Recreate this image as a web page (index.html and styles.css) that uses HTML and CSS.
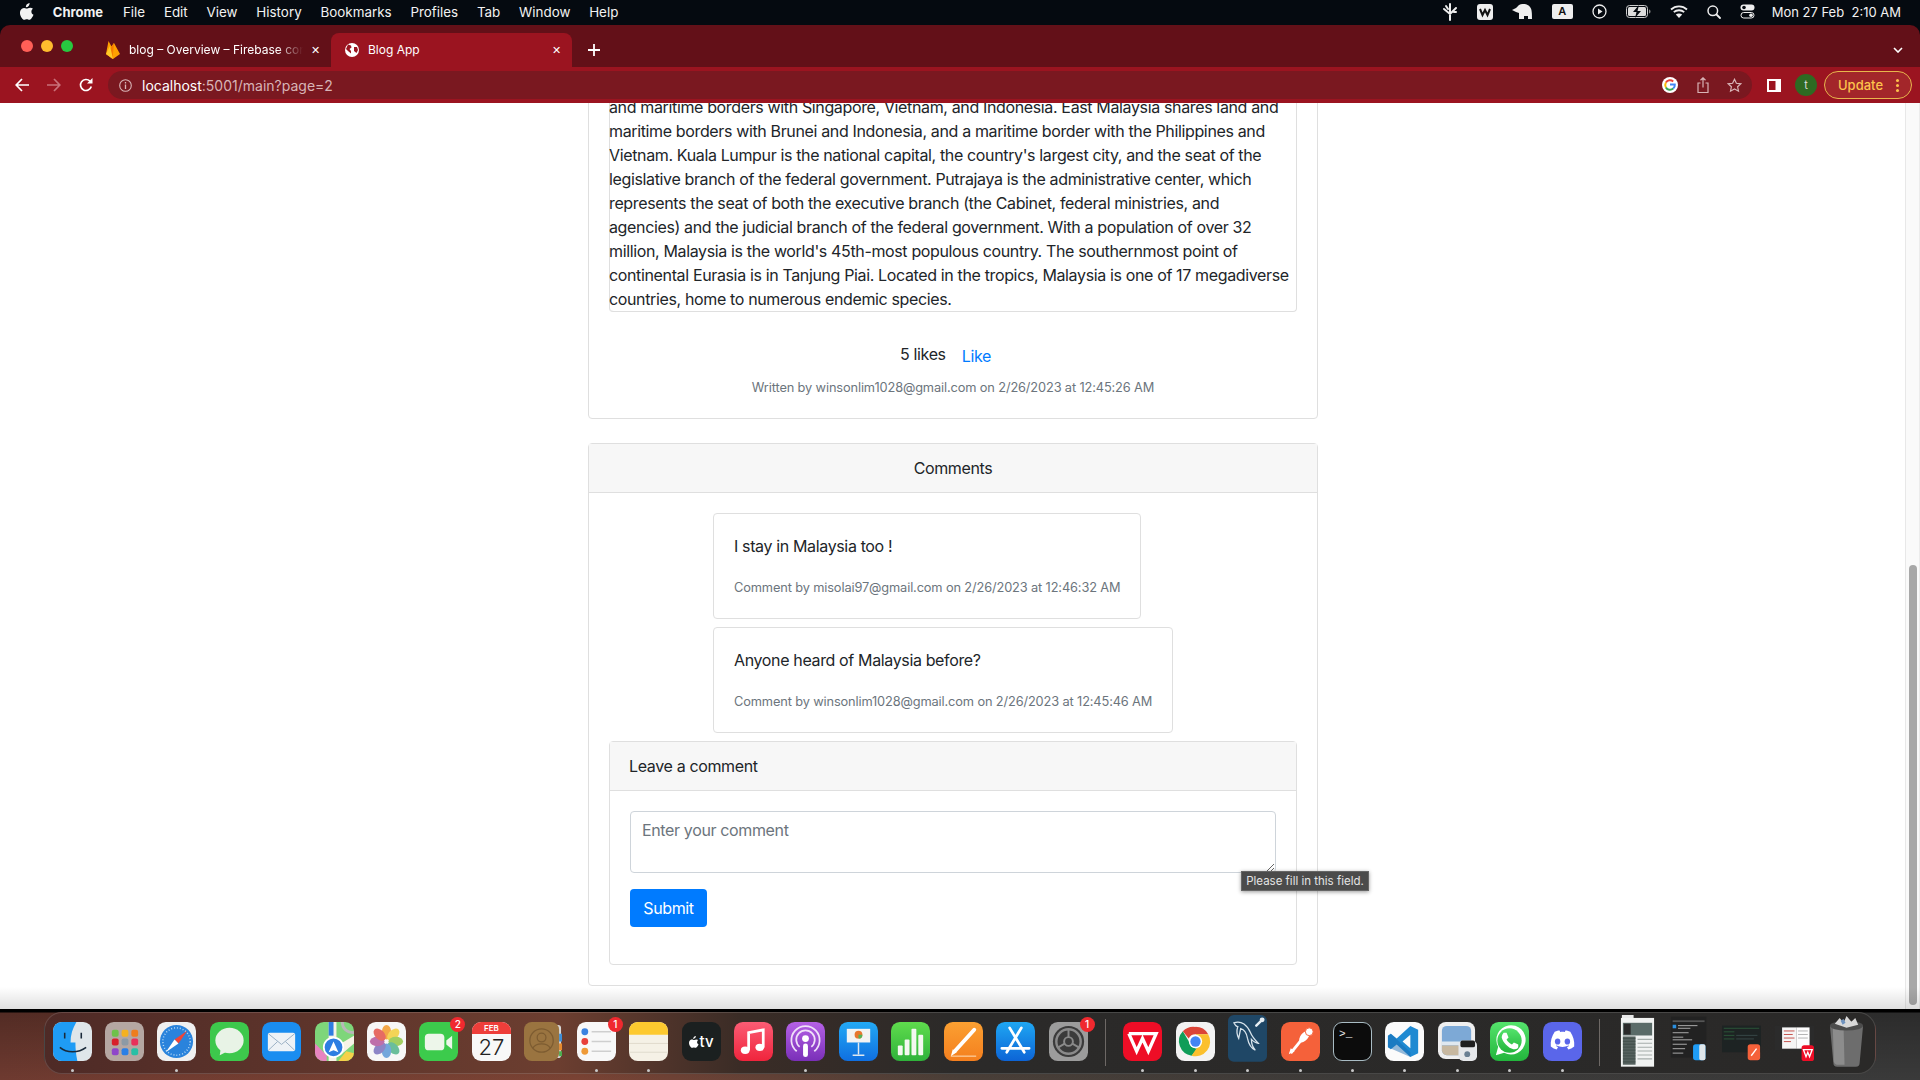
FILE: index.html
```html
<!DOCTYPE html>
<html lang="en">
<head>
  <meta charset="UTF-8">
  <title>Blog App</title>
  <link rel="stylesheet" href="styles.css">
</head>
<body>
  <div class="menubar">
    <svg class="apple" width="14" height="17" viewBox="0 0 14 17"><path fill="#f2f2f2" d="M9.6 0c.1 1.200-.4 2.300-1 3-.7.8-1.700 1.300-2.700 1.200C5.800 3.100 6.300 2 6.900 1.300 7.600.6 8.700.1 9.600 0zM13 5.800c-1 .7-1.600 1.600-1.600 2.900 0 1.500.9 2.500 2.100 3-.5 1.300-1 2.300-1.800 3.300-.7.900-1.400 1.800-2.400 1.800s-1.300-.6-2.500-.6-1.600.6-2.500.6c-1 0-1.800-1-2.500-1.900C.5 13.300-.2 11.100 0 9.200c.1-1.500.8-2.800 1.900-3.500 1.500-1 3.100-.7 4.300-.2.500.2.800.2 1.300 0 1.600-.7 3.900-1.100 5.500.3z"/></svg>
    <b class="menu-app">Chrome</b>
    <span class="menu-item">File</span>
    <span class="menu-item">Edit</span>
    <span class="menu-item">View</span>
    <span class="menu-item">History</span>
    <span class="menu-item">Bookmarks</span>
    <span class="menu-item">Profiles</span>
    <span class="menu-item">Tab</span>
    <span class="menu-item">Window</span>
    <span class="menu-item">Help</span>
    <div class="status">
      <svg width="16" height="18" viewBox="0 0 16 18"><path fill="none" stroke="#eee" stroke-width="2" stroke-linecap="round" d="M8 1v16M2 6l6 5 6-6M4 3l2 3M12 9l2 0"/></svg>
      <svg width="16" height="16" viewBox="0 0 16 16"><rect width="16" height="16" rx="3" fill="#eee"/><path fill="none" stroke="#111" stroke-width="2" d="M3 5l2.500 6L8 6l2.500 5L13 5"/></svg>
      <svg width="21" height="15" viewBox="0 0 21 15"><path fill="#eee" d="M0 6l4-2 3-3c4-2 9-1 11 2 2 2 2 7 2 12h-4v-3h-4v3H7V9L4 8z"/></svg>
      <span class="status-key">A</span>
      <svg width="15" height="15" viewBox="0 0 15 15"><circle cx="7.500" cy="7.500" r="6.500" fill="none" stroke="#eee" stroke-width="1.300"/><path fill="#eee" d="M6 4.500l4.500 3-4.500 3z"/></svg>
      <svg width="25" height="13" viewBox="0 0 25 13"><rect x=".5" y=".5" width="21" height="12" rx="3" fill="none" stroke="#ccc"/><rect x="2" y="2" width="18" height="9" rx="1.500" fill="#ddd"/><path fill="#050a10" d="M13 0L7 7h3.500L9 13l6-7h-3.500z"/><path fill="#888" d="M23 4.500c1 .2 1.500 1 1.500 2s-.5 1.800-1.500 2z"/></svg>
      <svg width="18" height="13" viewBox="0 0 18 13"><path fill="none" stroke="#eee" stroke-width="1.800" d="M1 4.500c4.500-4.200 11.500-4.200 16 0M3.800 7.200c2.900-2.600 7.500-2.600 10.400 0"/><path fill="#eee" d="M9 13L5.800 9.600c1.800-1.500 4.600-1.500 6.400 0z"/></svg>
      <svg width="14" height="14" viewBox="0 0 14 14"><circle cx="5.800" cy="5.800" r="4.800" fill="none" stroke="#eee" stroke-width="1.500"/><path stroke="#eee" stroke-width="1.800" stroke-linecap="round" d="M9.500 9.500L13 13"/></svg>
      <svg width="15" height="15" viewBox="0 0 15 15"><rect x=".5" y=".5" width="14" height="6" rx="3" fill="#eee"/><rect x="1" y="8.500" width="13" height="5.500" rx="2.700" fill="none" stroke="#eee"/><circle cx="4" cy="3.500" r="1.800" fill="#050a10"/><circle cx="11" cy="11.200" r="1.800" fill="#eee"/></svg>
    </div>
    <span class="clock">Mon 27 Feb&nbsp; 2:10 AM</span>
  </div>

  <div class="browser">
    <div class="tabstrip">
      <div class="traffic">
        <i class="light red"></i><i class="light amber"></i><i class="light green"></i>
      </div>
      <div class="tab">
        <svg class="favicon" width="14" height="19" viewBox="0 0 14 19"><path fill="#ffa000" d="M0 14L2.500 1l3 5.500L8 3l6 11-7 5z"/><path fill="#f57c00" d="M0 14L8 3l-1.500 16z"/><path fill="#ffca28" d="M0 14l4-8 3 13z"/></svg>
        <span class="tab-title fade">blog – Overview – Firebase console</span>
        <span class="tab-close">✕</span>
      </div>
      <div class="tab active">
        <svg class="favicon" width="14" height="14" viewBox="0 0 14 14"><circle cx="7" cy="7" r="7" fill="#fff"/><path fill="#9b1420" d="M3 1.500l3 1 .5 2-2 1.500 1.500 2v2.500L3 8 1 6zM9 4h3l1 3-1.500 3L9 8z"/></svg>
        <span class="tab-title">Blog App</span>
        <span class="tab-close">✕</span>
      </div>
      <svg class="new-tab" width="12" height="12" viewBox="0 0 12 12"><path stroke="#fff" stroke-width="1.800" d="M6 0v12M0 6h12"/></svg>
      <svg class="tab-menu" width="10" height="6" viewBox="0 0 10 6"><path fill="none" stroke="#fff" stroke-width="1.600" d="M1 1l4 4 4-4"/></svg>
    </div>

    <div class="toolbar">
      <svg class="nav-icon" width="14" height="14" viewBox="0 0 14 14"><path fill="none" stroke="#fff" stroke-width="1.700" d="M14 7H1.500M7 1L1.200 7 7 13"/></svg>
      <svg class="nav-icon" width="14" height="14" viewBox="0 0 14 14"><path fill="none" stroke="#c97079" stroke-width="1.700" d="M0 7h12.500M7 1l5.800 6L7 13"/></svg>
      <svg class="nav-icon" width="14" height="14" viewBox="0 0 14 14"><path fill="none" stroke="#fff" stroke-width="1.700" d="M12.300 8.500A5.500 5.500 0 1 1 11 3.200"/><path fill="#fff" d="M13.500 0v5.500H8z"/></svg>
      <div class="omnibox">
        <svg width="13" height="13" viewBox="0 0 13 13"><circle cx="6.500" cy="6.500" r="5.800" fill="none" stroke="#d8b4b6" stroke-width="1.100"/><path stroke="#d8b4b6" stroke-width="1.300" d="M6.500 5.500v4.500M6.500 3v1.500"/></svg>
        <span class="url"><b>localhost</b>:5001/main?page=2</span>
        <span class="omni-right">
          <svg width="16" height="16" viewBox="0 0 16 16"><circle cx="8" cy="8" r="8" fill="#fff"/><path fill="none" stroke="#ea4335" stroke-width="2" d="M3.900 5.600A4.800 4.800 0 0 1 11.200 4.400"/><path fill="none" stroke="#fbbc05" stroke-width="2" d="M3.900 5.600a4.800 4.800 0 0 0 0 4.800"/><path fill="none" stroke="#34a853" stroke-width="2" d="M3.900 10.400a4.800 4.800 0 0 0 7.300 1.200"/><path fill="none" stroke="#4285f4" stroke-width="2" d="M11.200 11.600A4.800 4.800 0 0 0 12.800 7.600H8"/></svg>
          <svg width="12" height="16" viewBox="0 0 12 16"><path fill="none" stroke="#d8b4b6" stroke-width="1.200" d="M3.500 6H1v9.500h10V6H8.500M6 10.500V1M3.500 3.200L6 .8l2.500 2.400"/></svg>
          <svg width="15" height="15" viewBox="0 0 15 15"><path fill="none" stroke="#d8b4b6" stroke-width="1.200" d="M7.500 1.300l1.900 4 4.400.5-3.200 3 .9 4.400-4-2.200-4 2.200.9-4.400-3.200-3 4.400-.5z"/></svg>
        </span>
      </div>
      <svg class="side-icon" width="14" height="13" viewBox="0 0 14 13"><rect width="14" height="13" fill="#fff"/><rect x="2" y="2" width="6.500" height="9" fill="#9b1420"/></svg>
      <span class="avatar">t</span>
      <span class="update">Update<i class="update-dots"></i></span>
    </div>

    <div class="viewport">
      <div class="scrolled">
        <div class="card post-card">
          <div class="post-body">
            <div class="article">and maritime borders with Singapore, Vietnam, and Indonesia. East Malaysia shares land and maritime borders with Brunei and Indonesia, and a maritime border with the Philippines and Vietnam. Kuala Lumpur is the national capital, the country's largest city, and the seat of the legislative branch of the federal government. Putrajaya is the administrative center, which represents the seat of both the executive branch (the Cabinet, federal ministries, and agencies) and the judicial branch of the federal government. With a population of over 32 million, Malaysia is the world's 45th-most populous country. The southernmost point of continental Eurasia is in Tanjung Piai. Located in the tropics, Malaysia is one of 17 megadiverse countries, home to numerous endemic species.</div>
            <div class="likes"><span>5 likes</span><a class="like-link" href="#">Like</a></div>
            <div class="muted centered">Written by winsonlim1028@gmail.com on 2/26/2023 at 12:45:26 AM</div>
          </div>
        </div>

        <div class="card comments-card">
          <div class="card-header centered">Comments</div>
          <div class="comments-body">
            <div class="comment-list">
              <div class="comment">
                <p>I stay in Malaysia too !</p>
                <div class="muted">Comment by misolai97@gmail.com on 2/26/2023 at 12:46:32 AM</div>
              </div>
              <div class="comment">
                <p>Anyone heard of Malaysia before?</p>
                <div class="muted">Comment by winsonlim1028@gmail.com on 2/26/2023 at 12:45:46 AM</div>
              </div>
            </div>
            <div class="card leave-card">
              <div class="card-header">Leave a comment</div>
              <div class="leave-body">
                <div class="textarea-wrap">
                  <textarea placeholder="Enter your comment"></textarea>
                  <div class="tooltip">Please fill in this field.</div>
                </div>
                <button class="submit">Submit</button>
              </div>
            </div>
          </div>
        </div>
      </div>
      <div class="scrollbar"><i class="scroll-thumb"></i></div>
      <div class="dock-shade"></div>
    </div>
  </div>

  <div class="desktop">
    <div class="dock">
      <!-- finder -->
      <span class="app"><svg viewBox="0 0 40 40"><rect width="40" height="40" rx="9" fill="#dfe6ea"/><path fill="#1f9cf5" d="M9 0h15c-4 7-6 13-6 21h5c0 6 .5 12 2 19H9a9 9 0 0 1-9-9V9a9 9 0 0 1 9-9z"/><path fill="none" stroke="#1a2a3a" stroke-width="1.600" d="M7 26c7 6 19 6 27 0M12 11v6M29 11v6"/></svg><i class="dot"></i></span>
      <!-- launchpad -->
      <span class="app"><svg viewBox="0 0 40 40"><rect width="40" height="40" rx="9" fill="#b5a7a2"/><rect x="7" y="8" width="7" height="7" rx="2" fill="#6ec14a"/><rect x="17" y="8" width="7" height="7" rx="2" fill="#f5b120"/><rect x="27" y="8" width="7" height="7" rx="2" fill="#ee7d1e"/><rect x="7" y="17" width="7" height="7" rx="2" fill="#d81f2a"/><rect x="17" y="17" width="7" height="7" rx="2" fill="#8d9aa5"/><rect x="27" y="17" width="7" height="7" rx="2" fill="#e8305a"/><rect x="7" y="27" width="7" height="7" rx="2" fill="#8f45c9"/><rect x="17" y="27" width="7" height="7" rx="2" fill="#2a7fe6"/><rect x="27" y="27" width="7" height="7" rx="2" fill="#28bfa5"/></svg></span>
      <!-- safari -->
      <span class="app"><svg viewBox="0 0 40 40"><rect width="40" height="40" rx="9" fill="#f0f0f0"/><circle cx="20" cy="20" r="17" fill="#2a83dc"/><circle cx="20" cy="20" r="14" fill="none" stroke="#bcdcf5" stroke-width="1.500" stroke-dasharray="1 2"/><path fill="#f04438" d="M31 9L18 18l4 4z"/><path fill="#fff" d="M9 31l9-13 4 4z"/></svg><i class="dot"></i></span>
      <!-- messages -->
      <span class="app"><svg viewBox="0 0 40 40"><rect width="40" height="40" rx="9" fill="#3dc84c"/><ellipse cx="20" cy="19" rx="14.500" ry="13" fill="#e8f3e6"/><path fill="#e8f3e6" d="M11 27l-1 7 8-4z"/></svg></span>
      <!-- mail -->
      <span class="app"><svg viewBox="0 0 40 40"><rect width="40" height="40" rx="9" fill="#1a8df0"/><rect x="6" y="11" width="28" height="19" rx="2" fill="#eef2f6"/><path fill="none" stroke="#9ab0c4" d="M6.500 12L20 23l13.500-11M6.500 29L16 20M33.500 29L24 20"/></svg></span>
      <!-- maps -->
      <span class="app"><svg viewBox="0 0 40 40"><rect width="40" height="40" rx="9" fill="#7ed67a"/><path fill="#f7f3e6" d="M14 0h8v40h-8z"/><path fill="#e884c0" d="M0 22l12 12v6H9a9 9 0 0 1-9-9z"/><path fill="#f6d24a" d="M24 40l8-10 8 2v-1 0a9 9 0 0 1-9 9z"/><path fill="#f7f3e6" d="M20 26L40 14v8L26 34z"/><path fill="none" stroke="#b8b8b8" stroke-width="3" d="M28 0c0 6 4 11 12 11"/><path fill="#2f7de1" d="M14 0h5v14h-5z"/><circle cx="19" cy="26" r="10" fill="#2d7ee2" stroke="#fff" stroke-width="1.800"/><path fill="#fff" d="M19 20l5 11-5-2-5 2z"/></svg></span>
      <!-- photos -->
      <span class="app"><svg viewBox="0 0 40 40"><rect width="40" height="40" rx="9" fill="#f7f7f7"/><g opacity=".85"><ellipse cx="20" cy="10.500" rx="4.800" ry="7.500" fill="#f39a2a"/><ellipse cx="27" cy="13" rx="4.800" ry="7.500" transform="rotate(45 27 13)" fill="#f4cf3b"/><ellipse cx="29.500" cy="20" rx="7.500" ry="4.800" fill="#93c748"/><ellipse cx="27" cy="27" rx="4.800" ry="7.500" transform="rotate(-45 27 27)" fill="#52b58c"/><ellipse cx="20" cy="29.500" rx="4.800" ry="7.500" fill="#5d9ad8"/><ellipse cx="13" cy="27" rx="4.800" ry="7.500" transform="rotate(45 13 27)" fill="#7b72bf"/><ellipse cx="10.500" cy="20" rx="7.500" ry="4.800" fill="#b5589d"/><ellipse cx="13" cy="13" rx="4.800" ry="7.500" transform="rotate(-45 13 13)" fill="#e4534a"/></g></svg></span>
      <!-- facetime -->
      <span class="app"><svg viewBox="0 0 40 40"><rect width="40" height="40" rx="9" fill="#3ccb4c"/><rect x="6" y="12" width="20" height="17" rx="4" fill="#edf6ea"/><path fill="#edf6ea" d="M28 19l6-5v14l-6-5z"/></svg><b class="badge">2</b></span>
      <!-- calendar -->
      <span class="app cal"><span class="cal-month">FEB</span><span class="cal-day">27</span></span>
      <!-- contacts -->
      <span class="app"><svg viewBox="0 0 40 40"><rect x="30" y="3" width="8" height="34" rx="3" fill="#d7d7d7"/><rect x="36" y="12" width="3" height="8" fill="#3f8fd8"/><rect x="36" y="22" width="3" height="7" fill="#e88b2d"/><rect x="36" y="30" width="3" height="5" fill="#4cae4f"/><rect width="36" height="40" rx="8" fill="#9a7440"/><circle cx="18" cy="19" r="12" fill="none" stroke="#7d5c31" stroke-width="1.300"/><circle cx="18" cy="16" r="4.500" fill="none" stroke="#7d5c31" stroke-width="1.300"/><path fill="none" stroke="#7d5c31" stroke-width="1.300" d="M9 27c3-6 15-6 18 0"/></svg></span>
      <!-- reminders -->
      <span class="app"><svg viewBox="0 0 40 40"><rect width="40" height="40" rx="9" fill="#f8f8f8"/><circle cx="8" cy="10" r="3.500" fill="#3b82e0"/><circle cx="8" cy="20" r="3.500" fill="#e8403a"/><circle cx="8" cy="30" r="3.500" fill="#ef9a38"/><path stroke="#cfcfcf" stroke-width="1.300" d="M15 10h20M15 20h20M15 30h20"/></svg><b class="badge">1</b><i class="dot"></i></span>
      <!-- notes -->
      <span class="app"><svg viewBox="0 0 40 40"><rect width="40" height="40" rx="9" fill="#f5f1e6"/><path fill="#fdc92f" d="M9 0h22a9 9 0 0 1 9 9v4H0V9a9 9 0 0 1 9-9z"/><path stroke="#dfdacc" d="M0 22h40M0 31h40"/></svg><i class="dot"></i></span>
      <!-- tv -->
      <span class="app tv"><svg width="10" height="12" viewBox="0 0 14 17"><path fill="#fff" d="M9.600 0c.1 1.200-.4 2.300-1 3-.7.800-1.700 1.300-2.700 1.200C5.800 3.100 6.300 2 6.900 1.300 7.600.6 8.700.1 9.600 0zM13 5.800c-1 .7-1.600 1.600-1.600 2.900 0 1.500.9 2.500 2.100 3-.5 1.300-1 2.300-1.800 3.300-.7.900-1.400 1.800-2.400 1.800s-1.300-.6-2.500-.6-1.600.6-2.500.6c-1 0-1.800-1-2.500-1.900C.5 13.300-.2 11.100 0 9.200c.1-1.500.8-2.800 1.900-3.500 1.500-1 3.100-.7 4.300-.2.500.2.800.2 1.300 0 1.600-.7 3.900-1.100 5.500.3z"/></svg><span>tv</span></span>
      <!-- music -->
      <span class="app"><svg viewBox="0 0 40 40"><defs><linearGradient id="mus" x1="0" y1="0" x2="0" y2="1"><stop offset="0" stop-color="#fb5c74"/><stop offset="1" stop-color="#f0243c"/></linearGradient></defs><rect width="40" height="40" rx="9" fill="url(#mus)"/><path fill="none" stroke="#fff" stroke-width="2.800" d="M15 29V11l15-3v18"/><ellipse cx="11.500" cy="29" rx="4.500" ry="3.800" fill="#fff"/><ellipse cx="26.500" cy="26" rx="4.500" ry="3.800" fill="#fff"/></svg></span>
      <!-- podcasts -->
      <span class="app"><svg viewBox="0 0 40 40"><defs><linearGradient id="pod" x1="0" y1="0" x2="0" y2="1"><stop offset="0" stop-color="#b561e6"/><stop offset="1" stop-color="#7a2fb8"/></linearGradient></defs><rect width="40" height="40" rx="9" fill="url(#pod)"/><g fill="none" stroke="#efe0f8" stroke-width="1.800"><path d="M11 30A14.500 14.500 0 1 1 29 30"/><path d="M14 25.500a9.500 9.500 0 1 1 12 0"/></g><circle cx="20" cy="17" r="3.500" fill="#fff"/><rect x="17.500" y="22" width="5" height="14" rx="2.500" fill="#fff"/></svg><i class="dot"></i></span>
      <!-- keynote -->
      <span class="app"><svg viewBox="0 0 40 40"><defs><linearGradient id="key" x1="0" y1="0" x2="0" y2="1"><stop offset="0" stop-color="#23a9f5"/><stop offset="1" stop-color="#0f6fe0"/></linearGradient></defs><rect width="40" height="40" rx="9" fill="url(#key)"/><rect x="8" y="7" width="24" height="14" fill="#f3f3f3"/><circle cx="20" cy="13" r="4" fill="#e8772e"/><path fill="#52b558" d="M20 13h4a4 4 0 0 1-4 4z"/><path stroke="#dfe8f0" stroke-width="1.500" d="M20 21v12M14 34h12"/></svg></span>
      <!-- numbers -->
      <span class="app"><svg viewBox="0 0 40 40"><defs><linearGradient id="num" x1="0" y1="0" x2="0" y2="1"><stop offset="0" stop-color="#5fdc4d"/><stop offset="1" stop-color="#2fb23a"/></linearGradient></defs><rect width="40" height="40" rx="9" fill="url(#num)"/><g fill="#f4f8f0"><rect x="7" y="24" width="5" height="10" rx="1"/><rect x="14" y="18" width="5" height="16" rx="1"/><rect x="21" y="7" width="5" height="27" rx="1"/><rect x="28" y="13" width="5" height="21" rx="1"/></g></svg></span>
      <!-- pages -->
      <span class="app"><svg viewBox="0 0 40 40"><defs><linearGradient id="pag" x1="0" y1="0" x2="0" y2="1"><stop offset="0" stop-color="#fba032"/><stop offset="1" stop-color="#f47f1e"/></linearGradient></defs><rect width="40" height="40" rx="9" fill="url(#pag)"/><path stroke="#fff" stroke-width="4" stroke-linecap="round" d="M31 8L11 30"/><path fill="#fff" d="M7 35l2-7 4 3z"/><path stroke="#ffe3c0" d="M7 35h26"/></svg></span>
      <!-- app store -->
      <span class="app"><svg viewBox="0 0 40 40"><defs><linearGradient id="app" x1="0" y1="0" x2="0" y2="1"><stop offset="0" stop-color="#1fa7f3"/><stop offset="1" stop-color="#0c64d6"/></linearGradient></defs><rect width="40" height="40" rx="9" fill="url(#app)"/><path fill="none" stroke="#fff" stroke-width="2.800" stroke-linecap="round" d="M14 6l15 25M26 6L11 31M6 27h28"/></svg></span>
      <!-- system preferences -->
      <span class="app"><svg viewBox="0 0 40 40"><rect width="40" height="40" rx="9" fill="#9c9c9c"/><circle cx="20" cy="20" r="16" fill="#3b3b3b"/><circle cx="20" cy="20" r="12.500" fill="none" stroke="#8a8a8a" stroke-width="2.500"/><circle cx="20" cy="20" r="4.500" fill="none" stroke="#8a8a8a" stroke-width="2"/><path stroke="#8a8a8a" stroke-width="2" d="M20 8v8M9.500 26l7-4M30.500 26l-7-4"/></svg><b class="badge">1</b></span>
      <i class="dock-sep"></i>
      <!-- wps -->
      <span class="app"><svg viewBox="0 0 40 40"><rect width="40" height="40" rx="9" fill="#ee0d26"/><path fill="none" stroke="#fff" stroke-width="3.400" d="M6 12l8 18 6-13 6 13 8-18H6"/></svg><i class="dot"></i></span>
      <!-- chrome -->
      <span class="app"><svg viewBox="0 0 40 40"><rect width="40" height="40" rx="9" fill="#f3f3f3"/><path fill="#db4437" d="M20 5a15 15 0 0 1 13 7.500H20a7.500 7.500 0 0 0-7 4.500L7 9.500A15 15 0 0 1 20 5z"/><path fill="#0f9d58" d="M7 9.500l6.500 11a7.500 7.500 0 0 0 9 6.500L16 34.500A15 15 0 0 1 7 9.500z"/><path fill="#fbc02d" d="M33 12.500A15 15 0 0 1 16 34.500L23 24a7.500 7.500 0 0 0-3-11.500z"/><circle cx="20" cy="20" r="6.800" fill="#fff"/><circle cx="20" cy="20" r="5.300" fill="#4285f4"/></svg><i class="dot"></i></span>
      <!-- mysql workbench -->
      <span class="app tall"><svg viewBox="0 0 40 48"><rect width="40" height="48" rx="6" fill="#1f4766"/><path fill="none" stroke="#d8e4ec" stroke-width="1.300" d="M6 8c8-3 14 3 17 10 2 5 5 8 8 11-3 0-5-2-7-4 0 4 1 8 4 11-5-2-7-7-8-12-1-6-3-9-7-10l-2 10c-2-4-2-9-1-12-2 0-3-2-4-4z"/><path stroke="#e6eef3" stroke-width="2.500" stroke-linecap="round" d="M29 11l6-6"/><circle cx="35" cy="5" r="2.500" fill="#e6eef3"/></svg><i class="dot"></i></span>
      <!-- postman -->
      <span class="app"><svg viewBox="0 0 40 40"><rect width="40" height="40" rx="9" fill="#f5613a"/><path fill="none" stroke="#fff" stroke-width="3" d="M10 32l12-15"/><ellipse cx="24" cy="15" rx="3.800" ry="7" transform="rotate(40 24 15)" fill="#fff"/><circle cx="29" cy="10" r="4" fill="#fff" stroke="#f5613a"/><path fill="#fff" d="M8 33l2-6 4 3z"/></svg><i class="dot"></i></span>
      <!-- terminal -->
      <span class="app term"><span>&gt;_</span><i class="dot"></i></span>
      <!-- vscode -->
      <span class="app"><svg viewBox="0 0 40 40"><rect width="40" height="40" rx="9" fill="#fbfbfb"/><path fill="#1f8ad2" d="M26 4l8 4v24l-8 4-14-13-6 5-3-2v-12l3-2 6 5zM26 13l-8 7 8 7z"/><path fill="#1769b0" d="M3 14l3-2 20 19v5L3 26z" opacity=".45"/></svg><i class="dot"></i></span>
      <!-- preview -->
      <span class="app"><svg viewBox="0 0 40 40"><rect width="38" height="38" rx="8" fill="#efefef"/><rect x="4" y="4" width="30" height="30" rx="5" fill="#7da9d6"/><path fill="#dfe8f0" d="M4 20h30v4H4z"/><path fill="#c7b8a0" d="M4 24h30v5a5 5 0 0 1-5 5H9a5 5 0 0 1-5-5z"/><rect x="21" y="19" width="19" height="21" rx="5" fill="#e5e7ea"/><rect x="23" y="19" width="15" height="7" rx="2" fill="#1f1f1f"/><circle cx="30" cy="33" r="3" fill="#6a7f92"/></svg><i class="dot"></i></span>
      <!-- whatsapp -->
      <span class="app"><svg viewBox="0 0 40 40"><defs><linearGradient id="wa" x1="0" y1="0" x2="0" y2="1"><stop offset="0" stop-color="#55e36c"/><stop offset="1" stop-color="#22b53c"/></linearGradient></defs><rect width="40" height="40" rx="9" fill="url(#wa)"/><path fill="#fff" d="M6 34l2.400-8.500A15 15 0 1 1 14.500 31.500z"/><circle cx="20" cy="19" r="12.500" fill="url(#wa)"/><path fill="#fff" d="M14 11l3 0 2 5-2 2c1 2 3 4 5.500 5l2-2 4.500 2v3c-1 2-3 2-5 2-5-1-11-7-12-12 0-2 1-4 2-5z"/></svg><i class="dot"></i></span>
      <!-- discord -->
      <span class="app"><svg viewBox="0 0 40 40"><rect width="40" height="40" rx="9" fill="#5a66ea"/><path fill="#fff" d="M12 10c2-.8 4-1.200 5-1.200l.6 1.400c1.600-.2 3.200-.2 4.800 0l.6-1.400c1 0 3 .4 5 1.200 3 4.500 4.500 9.500 4 15-2 1.600-4 2.600-6 3.200l-1.400-2.400c.8-.3 1.500-.6 2.200-1.100l-.6-.5c-4.200 2-8.200 2-12.400 0l-.6.5c.7.500 1.400.8 2.200 1.100L14 28.200c-2-.6-4-1.600-6-3.200-.5-5.500 1-10.500 4-15z"/><ellipse cx="15" cy="20" rx="2.800" ry="3.200" fill="#5a66ea"/><ellipse cx="25" cy="20" rx="2.800" ry="3.200" fill="#5a66ea"/></svg><i class="dot"></i></span>
      <i class="dock-sep"></i>
      <!-- pinned document -->
      <span class="app doc"><svg viewBox="0 0 40 54"><rect x="4" y="0" width="12" height="5" fill="#e8e8e8"/><rect x="3" y="3" width="34" height="50" fill="#f1f3f2"/><rect x="5" y="8" width="30" height="13" fill="#5a6b68"/><rect x="6" y="9" width="7" height="11" fill="#2a2a2a"/><g stroke="#9aa6a2" stroke-width="1.300"><path d="M5 24h13M5 27h13M5 30h13M5 33h13M5 36h13M5 39h13M5 42h13M5 45h13M5 48h13"/></g><rect x="5" y="22" width="13" height="29" fill="#2f3d3a" opacity=".8"/><g stroke="#a5adaa" stroke-width="1.100"><path d="M20 25h15M20 29h15M20 33h15M20 37h15M20 41h15M20 45h15"/></g></svg></span>
      <!-- stack: finder window -->
      <span class="app thumb"><svg viewBox="0 0 44 54"><rect x="1" y="2" width="40" height="46" fill="#222"/><rect x="3" y="6" width="36" height="2" fill="#555"/><rect x="3" y="11" width="4" height="4" fill="#2a8fe0"/><path stroke="#bbb" d="M9 12h22M9 15h14M3 20h18M3 25h12M3 28h22M3 33h16M3 38h14M3 43h12"/><rect x="26" y="33" width="14" height="18" rx="3" fill="#1f9cf5"/><rect x="33" y="33" width="7" height="18" rx="2" fill="#dfe6ea"/></svg></span>
      <!-- stack: postman window -->
      <span class="app thumb"><svg viewBox="0 0 44 54"><rect x="0" y="12" width="44" height="30" fill="#1d2323"/><path stroke="#2c5a3a" d="M2 15h40M2 19h12M2 23h12M2 27h12"/><path stroke="#3a4a4a" d="M16 23h24M16 27h20"/><rect x="29" y="33" width="14" height="18" rx="3" fill="#f5613a"/><path stroke="#fff" stroke-width="1.500" d="M33 46l6-8"/></svg></span>
      <!-- stack: wps window -->
      <span class="app thumb"><svg viewBox="0 0 44 54"><rect x="0" y="12" width="44" height="28" fill="#2b2b2b"/><rect x="8" y="14" width="16" height="24" fill="#f5f5f5"/><rect x="24" y="14" width="15" height="24" fill="#fdfdfd"/><path stroke="#c0403a" d="M10 18h12M10 22h10M10 26h12M10 30h8"/><path stroke="#aaa" d="M26 18h11M26 22h11M26 26h11"/><rect x="30" y="34" width="14" height="18" rx="3" fill="#ee0d26"/><path fill="none" stroke="#fff" stroke-width="1.500" d="M32 39l3 8 2-5 2 5 3-8z"/></svg></span>
      <!-- trash -->
      <span class="app doc"><svg viewBox="0 0 40 54"><path fill="#6d6d6d" d="M3 11h34l-3.500 38a4 4 0 0 1-4 4h-19a4 4 0 0 1-4-4z"/><path fill="#8c8c8c" d="M6 13h11l1 38h-8a4 4 0 0 1-3-3z"/><ellipse cx="20" cy="11" rx="17" ry="5" fill="#4c4c4c"/><path fill="#d8d8d8" d="M8 9l5-6 4 5 3-7 5 6 4-4 3 7-12 3z"/><path fill="#6f93bf" d="M14 6l3-2 2 4-3 2z"/></svg></span>
    </div>
  </div>
</body>
</html>
```

FILE: styles.css
```css
* {
  box-sizing: border-box;
}
html, body {
  height: 100%;
}
body {
  margin: 0;
  height: 1080px;
  overflow: hidden;
  display: flex;
  flex-direction: column;
  font-family: "Inter", "Liberation Sans", sans-serif;
  background: #050a10;
}

/* mac menu bar */
.menubar {
  height: 25px;
  flex: none;
  display: flex;
  align-items: center;
  gap: 18.800px;
  padding: 0 0 2px 20px;
  background: #050a10;
  color: #f2f2f2;
  font-size: 13.400px;
}
.menu-app {
  font-size: 13px;
  font-weight: 700;
  margin-right: 1px;
}
.menu-item {
  white-space: nowrap;
}
.status {
  margin-left: auto;
  display: flex;
  align-items: center;
  gap: 19px;
}
.status-key {
  width: 21px;
  height: 15px;
  border-radius: 2px;
  background: #eee;
  color: #111;
  font-size: 11px;
  font-weight: 600;
  text-align: center;
  line-height: 15px;
}
.clock {
  font-size: 13px;
  margin-left: -2px;
  margin-right: 19px;
  white-space: nowrap;
}

/* chrome */
.browser {
  flex: none;
  height: 984px;
  display: flex;
  flex-direction: column;
  border-radius: 10px 10px 0 0;
  overflow: hidden;
}
.tabstrip {
  height: 42px;
  flex: none;
  display: flex;
  align-items: flex-end;
  background: #631018;
  color: #fff;
  font-size: 12px;
}
.traffic {
  align-self: flex-start;
  display: flex;
  gap: 8px;
  margin: 15px 0 0 21px;
  width: 85px;
}
.light {
  width: 12px;
  height: 12px;
  border-radius: 50%;
}
.red { background: #ff5f57; }
.amber { background: #febc2e; }
.green { background: #28c840; }
.tab {
  width: 225px;
  height: 34px;
  display: flex;
  align-items: center;
  padding-bottom: 1px;
  flex: none;
}
.tab .favicon {
  margin-right: 9px;
  flex: none;
}
.tab-title {
  flex: 1;
  white-space: nowrap;
  overflow: hidden;
}
.fade {
  -webkit-mask-image: linear-gradient(to right, #000 85%, transparent 100%);
  mask-image: linear-gradient(to right, #000 85%, transparent 100%);
}
.tab-close {
  font-size: 11px;
  width: 14px;
  margin: 0 9px 0 5px;
  text-align: center;
}
.tab.active {
  width: 241px;
  background: #9b1420;
  border-radius: 8px 8px 0 0;
  padding-left: 14px;
}
.new-tab {
  margin: 0 0 11px 16px;
}
.tab-menu {
  margin: 0 17px 14px auto;
}
.toolbar {
  height: 36px;
  flex: none;
  display: flex;
  align-items: center;
  background: #9b1420;
  padding-left: 15px;
}
.nav-icon {
  margin-right: 18px;
  flex: none;
}
.omnibox {
  width: 1644px;
  height: 28px;
  margin-left: -3px;
  flex: none;
  display: flex;
  align-items: center;
  border-radius: 14px;
  background: #7a1820;
  padding-left: 11px;
  font-size: 14px;
  color: #d8b4b6;
}
.url {
  margin-left: 10px;
}
.url b {
  font-weight: 400;
  color: #fff;
}
.omni-right {
  margin-left: auto;
  margin-right: 10px;
  display: flex;
  align-items: center;
  gap: 18.500px;
}
.side-icon {
  margin-left: 15px;
  flex: none;
}
.avatar {
  width: 22px;
  height: 22px;
  margin-left: 14px;
  border-radius: 50%;
  background: #2e6a22;
  color: #ddd;
  font-size: 11px;
  text-align: center;
  line-height: 22px;
  flex: none;
}
.update {
  width: 88px;
  height: 28px;
  margin-left: 7px;
  flex: none;
  display: flex;
  align-items: center;
  border: 1px solid #e8b64c;
  border-radius: 14px;
  padding-left: 13px;
  background: #a3262a;
  color: #fdc24c;
  font-size: 13px;
  font-weight: 500;
  position: relative;
}
.update-dots {
  position: absolute;
  right: 12px;
  top: 7px;
  width: 3px;
  height: 3px;
  border-radius: 50%;
  background: #fdc24c;
  box-shadow: 0 5px 0 #fdc24c, 0 10px 0 #fdc24c;
}

/* the blog page, scrolled down */
.viewport {
  flex: 1;
  position: relative;
  overflow: hidden;
  background: #fff;
  color: #212529;
  font-size: 16px;
  line-height: 24px;
  letter-spacing: -0.36px;
}
.scrolled {
  width: 730px;
  margin: -9px 0 0 588px;
}
.card {
  border: 1px solid #dfdfdf;
  border-radius: 4px;
  background: #fff;
}
.post-body {
  padding: 0 20px 20px;
}
.article {
  border: 1px solid #dfdfdf;
  border-top: 0;
  border-left: 0;
  box-shadow: inset 1px 0 0 #dfdfdf;
  border-radius: 0 0 4px 4px;
  padding-right: 4px;
}
.likes {
  display: flex;
  justify-content: center;
  gap: 16px;
  margin-top: 30px;
  padding-right: 15px;
}
.like-link {
  color: #007bff;
  text-decoration: none;
  position: relative;
  top: 2px;
}
.muted {
  color: #6c757d;
  font-size: 12.800px;
  line-height: 20px;
  letter-spacing: -0.13px;
}
.centered {
  text-align: center;
}
.post-body .muted {
  margin-top: 12px;
}
.comments-card {
  margin-top: 24px;
}
.card-header {
  height: 49px;
  padding: 12px 19px;
  background: #f7f7f7;
  border-bottom: 1px solid #dfdfdf;
}
.comments-body {
  padding: 20px;
}
.comment-list {
  display: flex;
  flex-direction: column;
  align-items: flex-start;
  gap: 8px;
  margin-left: 104px;
}
.comment {
  border: 1px solid #dfdfdf;
  border-radius: 4px;
  padding: 20px;
  height: 106px;
}
.comment p {
  margin: 0 0 20px;
}
.leave-card {
  margin-top: 8px;
}
.leave-body {
  padding: 20px 20px 37px;
}
.textarea-wrap {
  position: relative;
  height: 62px;
}
textarea {
  display: block;
  width: 100%;
  height: 62px;
  padding: 6px 11px;
  border: 1px solid #ced4da;
  border-radius: 4px;
  font: inherit;
  letter-spacing: inherit;
  color: #495057;
}
textarea::placeholder {
  color: #6c757d;
  opacity: 1;
}
.tooltip {
  position: absolute;
  left: 611px;
  top: 60px;
  width: 128px;
  height: 20px;
  background: #4b4b4b;
  border: 1px solid #666;
  box-shadow: 0 1px 4px rgba(0,0,0,0.4);
  color: #e4e4e4;
  font-size: 11.500px;
  letter-spacing: 0;
  line-height: 18px;
  text-align: center;
}
.submit {
  display: block;
  margin-top: 16px;
  padding: 0 0 1px;
  width: 77px;
  height: 38px;
  border: 0;
  border-radius: 4px;
  background: #007bff;
  color: #fff;
  font: inherit;
  letter-spacing: inherit;
}
.scrollbar {
  position: absolute;
  right: 0;
  top: 0;
  bottom: 0;
  width: 15px;
  background: #fafafa;
  border-left: 1px solid #e8e8e8;
  border-right: 1px solid #ececec;
}
.scroll-thumb {
  position: absolute;
  left: 3px;
  right: 2px;
  top: 462px;
  bottom: 4px;
  border-radius: 5px;
  background: #a8a8a8;
}
.dock-shade {
  position: absolute;
  left: 0;
  right: 0;
  bottom: 0;
  height: 22px;
  background: linear-gradient(to bottom, rgba(0,0,0,0), rgba(0,0,0,0.12));
}

/* desktop and dock */
.desktop {
  flex: 1;
  position: relative;
  background:
    linear-gradient(to bottom, #000 0, #000 3px, rgba(0,0,0,0.25) 4px, rgba(0,0,0,0) 100%),
    linear-gradient(to right, #6e3a30 0%, #7a4334 30%, #4a3f38 50%, #3d3b39 70%, #3a3a3a 100%);
}
.dock {
  position: absolute;
  left: 44px;
  top: 3px;
  width: 1832px;
  height: 62px;
  display: flex;
  align-items: flex-start;
  gap: 13.430px;
  padding: 9px 0 0 7.500px;
  border: 1px solid rgba(255,255,255,0.14);
  border-radius: 18px;
  background: linear-gradient(to right, #4e2a26 0%, #6c3e30 28%, #3a2c26 38%, #2b2a29 50%, #2a2928 100%);
}
.app {
  width: 39px;
  height: 39px;
  flex: none;
  position: relative;
  display: block;
}
.app svg {
  display: block;
  width: 100%;
}
.tall {
  height: 46px;
  margin-top: -7px;
}
.doc, .thumb {
  height: 52px;
  margin-top: -7px;
}
.dot {
  position: absolute;
  left: 18px;
  top: 47px;
  width: 3px;
  height: 3px;
  border-radius: 50%;
  background: #c8c8c8;
}
.tall .dot {
  top: 54px;
}
.badge {
  position: absolute;
  right: -7px;
  top: -5px;
  width: 15px;
  height: 15px;
  border-radius: 50%;
  background: #f0292f;
  color: #fff;
  font-size: 10px;
  font-weight: 500;
  line-height: 15px;
  text-align: center;
}
.dock-sep {
  width: 1px;
  height: 47px;
  flex: none;
  margin: -3px 4px 0;
  background: #6d6865;
}
.cal {
  border-radius: 9px;
  overflow: hidden;
  background: #f8f8f8;
  text-align: center;
  color: #222;
}
.cal-month {
  display: block;
  height: 12px;
  background: #ee3e3a;
  color: #fff;
  font-size: 8px;
  font-weight: 600;
  line-height: 12px;
}
.cal-day {
  display: block;
  font-size: 22px;
  line-height: 26px;
  font-weight: 300;
}
.tv {
  display: flex;
  align-items: center;
  justify-content: center;
  gap: 1px;
  border-radius: 9px;
  background: #1b2020;
  color: #fff;
  font-size: 15px;
  font-weight: 500;
}
.tv svg {
  width: 10px;
}
.term {
  border-radius: 9px;
  background: #0c0c0c;
  border: 1.500px solid #a9bcc4;
  color: #eee;
  font-family: "Liberation Mono", monospace;
  font-size: 11px;
  line-height: 14px;
  padding: 4px 0 0 5px;
}
.term .dot {
  left: 17px;
  top: 46px;
}
```
